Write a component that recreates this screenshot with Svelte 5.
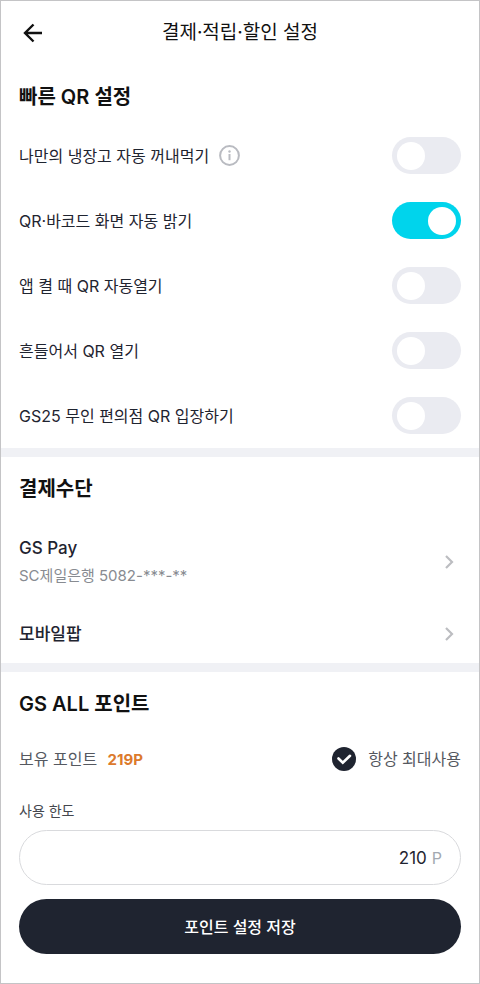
<script>
  let toggles = [
    { id: "fridge", label: "나만의 냉장고 자동 꺼내먹기", on: false, info: true },
    { id: "bright", label: "QR·바코드 화면 자동 밝기", on: true },
    { id: "launch", label: "앱 켤 때 QR 자동열기", on: false },
    { id: "shake", label: "흔들어서 QR 열기", on: false },
    { id: "gs25", label: "GS25 무인 편의점 QR 입장하기", on: false }
  ];

  let payments = [
    { name: "GS Pay", account: "SC제일은행 5082-***-**" },
    { name: "모바일팝" }
  ];

  let owned = 219;
  let useMax = true;
  let limit = "210";

  function savePoints(e) {
    e.preventDefault();
  }
</script>

<style>
  :global(body) {
    background: #fff;
  }
  .page {
    box-sizing: border-box;
    min-height: 100vh;
    border: 1px solid #c4c4c6;
    background: #fff;
    color: #1f2430;
    font-family: Inter, "Noto Sans CJK KR", sans-serif;
    font-size: 16px;
    line-height: 24px;
  }
  button,
  input {
    box-sizing: border-box;
    margin: 0;
    font-family: inherit;
  }
  svg {
    display: block;
  }

  header {
    display: grid;
    grid-template-columns: 28px 1fr 28px;
    align-items: center;
    height: 64px;
    padding: 0 18px;
  }
  .back {
    padding: 0;
    border: none;
    background: none;
    color: #111;
    cursor: pointer;
  }
  h1 {
    margin: 0;
    color: #111;
    font-size: 19px;
    font-weight: 400;
    line-height: 28px;
    text-align: center;
  }

  section {
    padding: 18px 18px 0;
  }
  section + section {
    border-top: 9px solid #f0f1f5;
  }
  h2 {
    margin: 0 0 12px;
    color: #111;
    font-size: 20px;
    font-weight: 600;
    line-height: 28px;
  }

  .row {
    display: flex;
    align-items: center;
    justify-content: space-between;
    height: 65px;
  }
  .name {
    display: flex;
    align-items: center;
    gap: 10px;
  }
  .info {
    padding: 0;
    border: none;
    background: none;
    cursor: pointer;
  }
  .switch {
    appearance: none;
    width: 69px;
    height: 37px;
    padding: 5px;
    border-radius: 20px;
    background: #eaebf1;
    cursor: pointer;
  }
  .switch::before {
    content: "";
    display: block;
    width: 28px;
    height: 28px;
    border-radius: 50%;
    background: #fff;
    transition: 0.2s;
  }
  .switch:checked {
    background: #00d4ec;
  }
  .switch:checked::before {
    margin-left: 31px;
  }

  ul {
    margin: 0;
    padding: 4px 0 0;
    list-style: none;
  }
  .pay {
    display: flex;
    align-items: center;
    justify-content: space-between;
    padding: 17px 0;
    color: inherit;
    text-decoration: none;
  }
  .pay strong {
    display: block;
    font-size: 17px;
    font-weight: 500;
  }
  .pay small {
    display: block;
    margin-top: 4px;
    color: #888b91;
    font-size: 15px;
  }

  .points {
    display: flex;
    align-items: center;
    justify-content: space-between;
    height: 58px;
    color: #55585f;
  }
  .points b {
    margin-left: 6px;
    color: #dc7a2c;
    font-size: 15px;
  }
  .max {
    display: flex;
    align-items: center;
    gap: 12px;
    cursor: pointer;
  }
  .tick {
    display: grid;
  }
  .tick input,
  .tick svg {
    grid-area: 1 / 1;
    width: 24px;
    height: 24px;
  }
  .tick input {
    appearance: none;
    border-radius: 50%;
    background: #d5d7dd;
    cursor: pointer;
  }
  .tick input:checked {
    background: #1f2430;
  }
  .tick svg {
    pointer-events: none;
  }

  form {
    padding: 12px 0 29px;
  }
  .caption {
    display: block;
    margin-bottom: 8px;
    color: #44474e;
    font-size: 14px;
    line-height: 22px;
  }
  .field {
    display: flex;
    align-items: center;
    box-sizing: border-box;
    height: 55px;
    margin-bottom: 14px;
    padding: 0 18px;
    border: 1px solid #d9dadd;
    border-radius: 28px;
  }
  .field input {
    flex: 1;
    min-width: 0;
    padding: 0 5px 0 0;
    border: none;
    outline: none;
    background: none;
    color: #1f2430;
    font-size: 17px;
    text-align: right;
  }
  .field span {
    color: #a3a9b1;
  }
  .save {
    display: block;
    width: 100%;
    height: 55px;
    padding: 0 0 2px;
    border: none;
    border-radius: 28px;
    background: #1f2430;
    color: #fff;
    font-size: 16px;
    font-weight: 500;
    cursor: pointer;
  }
</style>

<div class="page">
  <header>
    <button class="back" type="button" aria-label="뒤로">
      <svg width="28" height="28" viewBox="0 0 28 28" fill="none" stroke="currentColor" stroke-width="2.4">
        <path d="M23 14H6.500M14.500 5.500L6 14l8.500 8.500" />
      </svg>
    </button>
    <h1>결제·적립·할인 설정</h1>
  </header>

  <section>
    <h2>빠른 QR 설정</h2>
    {#each toggles as item (item.id)}
      <div class="row">
        <div class="name">
          <label for={item.id}>{item.label}</label>
          {#if item.info}
            <button class="info" type="button" aria-label="안내">
              <svg width="21" height="21" viewBox="0 0 21 21" fill="none" stroke="#b9bbc1" stroke-width="2">
                <circle cx="10.5" cy="10.5" r="9.400" />
                <path d="M10.500 9v6.200" />
                <circle cx="10.500" cy="6.500" r="1.200" fill="#b9bbc1" stroke="none" />
              </svg>
            </button>
          {/if}
        </div>
        <input class="switch" id={item.id} type="checkbox" role="switch" bind:checked={item.on} />
      </div>
    {/each}
  </section>

  <section>
    <h2>결제수단</h2>
    <ul>
      {#each payments as pay}
        <li>
          <a class="pay" href="#pay">
            <span>
              <strong>{pay.name}</strong>
              {#if pay.account}
                <small>{pay.account}</small>
              {/if}
            </span>
            <svg width="24" height="24" viewBox="0 0 24 24" fill="none" stroke="#bcbdc1" stroke-width="2.200">
              <path d="M9 6l6 6-6 6" />
            </svg>
          </a>
        </li>
      {/each}
    </ul>
  </section>

  <section>
    <h2>GS ALL 포인트</h2>
    <div class="points">
      <span>보유 포인트 <b>{owned}P</b></span>
      <label class="max">
        <span class="tick">
          <input type="checkbox" bind:checked={useMax} />
          <svg viewBox="0 0 24 24" fill="none" stroke="#fff" stroke-width="2.600" stroke-linecap="round">
            <path d="M6.500 11.500l4.300 4.200 7.200-6.900" />
          </svg>
        </span>
        항상 최대사용
      </label>
    </div>
    <form on:submit={savePoints}>
      <label class="caption" for="limit">사용 한도</label>
      <div class="field">
        <input id="limit" type="text" inputmode="numeric" bind:value={limit} />
        <span>P</span>
      </div>
      <button class="save" type="submit">포인트 설정 저장</button>
    </form>
  </section>
</div>
